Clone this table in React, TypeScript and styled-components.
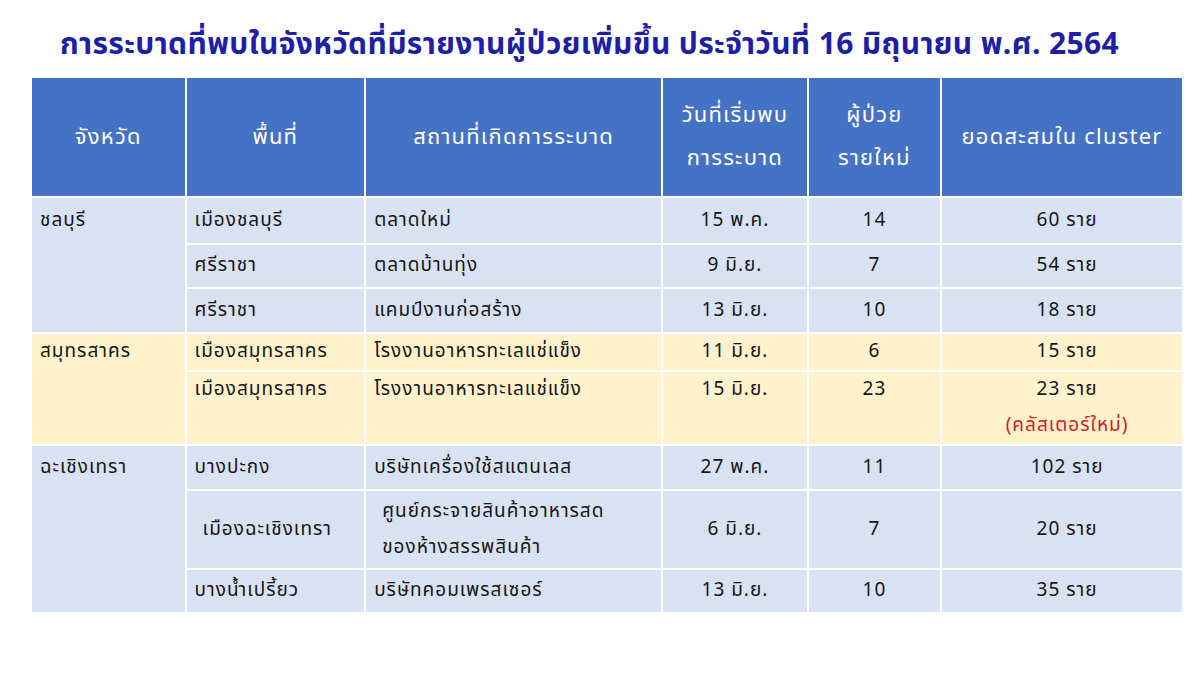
import React from "react";
import styled, { createGlobalStyle } from "styled-components";

const Global = createGlobalStyle`
  html, body { margin: 0; padding: 0; background: #ffffff; }
  body { font-family: Tahoma, "Noto Sans Thai", "Noto Sans", "DejaVu Sans", sans-serif; }
`;

const Page = styled.div`
  width: 1200px;
  height: 675px;
  box-sizing: border-box;
  padding: 22px 0 0 30px;
  display: flex;
  flex-direction: column;
  align-items: flex-start;
`;

const Title = styled.h1`
  margin: 0 0 8px 30px;
  font-size: 30px;
  font-weight: 700;
  letter-spacing: 0.35px;
  line-height: 46px;
  color: #1f1fa6;
  white-space: nowrap;
`;

const Table = styled.table`
  border-collapse: separate;
  border-spacing: 2px;
  table-layout: fixed;
  width: 1154px;
`;

const HeadCell = styled.th<{ $w: number }>`
  width: ${(p) => p.$w}px;
  height: 118px;
  box-sizing: border-box;
  padding: 0;
  background: #4472c4;
  color: #ffffff;
  font-size: 22px;
  font-weight: 400;
  letter-spacing: 1.2px;
  line-height: 43px;
  text-align: center;
  vertical-align: middle;
  white-space: nowrap;
`;

const Row = styled.tr<{ $h: number }>`
  height: ${(p) => p.$h}px;
`;

const Cell = styled.td<{
  $bg: "blue" | "yellow";
  $align?: "left" | "center";
  $valign?: "top" | "middle";
  $pad?: number;
}>`
  box-sizing: border-box;
  padding: 0 0 0 ${(p) => (p.$pad ?? 8)}px;
  background: ${(p) => (p.$bg === "yellow" ? "#fff2cc" : "#d9e2f3")};
  color: #161616;
  font-size: 19px;
  letter-spacing: 1px;
  line-height: 36px;
  text-align: ${(p) => p.$align ?? "left"};
  vertical-align: ${(p) => p.$valign ?? "middle"};
  white-space: nowrap;
`;

const NumCell = styled(Cell)`
  padding: 0;
`;

const TotalCell = styled(Cell)`
  padding: 0 0 0 10px;
`;

const ProvinceLabel = styled.div<{ $h: number }>`
  height: ${(p) => p.$h}px;
  display: flex;
  align-items: center;
`;

const Note = styled.span`
  display: block;
  color: #d42020;
`;

type Bg = "blue" | "yellow";

interface DataRow {
  h: number;
  bg: Bg;
  province?: { name: string; span: number };
  area: string;
  areaPad?: number;
  place: React.ReactNode;
  placePad?: number;
  date: string;
  cases: string;
  total: React.ReactNode;
  valign?: "top" | "middle";
}

const rows: DataRow[] = [
  { h: 45, bg: "blue", province: { name: "ชลบุรี", span: 3 }, area: "เมืองชลบุรี", place: "ตลาดใหม่", date: "15 พ.ค.", cases: "14", total: "60 ราย" },
  { h: 42, bg: "blue", area: "ศรีราชา", place: "ตลาดบ้านทุ่ง", date: "9 มิ.ย.", cases: "7", total: "54 ราย" },
  { h: 43, bg: "blue", area: "ศรีราชา", place: "แคมป์งานก่อสร้าง", date: "13 มิ.ย.", cases: "10", total: "18 ราย" },
  { h: 35, bg: "yellow", province: { name: "สมุทรสาคร", span: 2 }, area: "เมืองสมุทรสาคร", place: "โรงงานอาหารทะเลแช่แข็ง", date: "11 มิ.ย.", cases: "6", total: "15 ราย" },
  {
    h: 70, bg: "yellow", area: "เมืองสมุทรสาคร", place: "โรงงานอาหารทะเลแช่แข็ง", date: "15 มิ.ย.", cases: "23",
    total: (<>23 ราย<Note>(คลัสเตอร์ใหม่)</Note></>), valign: "top",
  },
  { h: 43, bg: "blue", province: { name: "ฉะเชิงเทรา", span: 3 }, area: "บางปะกง", place: "บริษัทเครื่องใช้สแตนเลส", date: "27 พ.ค.", cases: "11", total: "102 ราย" },
  {
    h: 77, bg: "blue", area: "เมืองฉะเชิงเทรา", areaPad: 16, placePad: 16,
    place: (<>ศูนย์กระจายสินค้าอาหารสด<br />ของห้างสรรพสินค้า</>), date: "6 มิ.ย.", cases: "7", total: "20 ราย",
  },
  { h: 42, bg: "blue", area: "บางน้ำเปรี้ยว", place: "บริษัทคอมเพรสเซอร์", date: "13 มิ.ย.", cases: "10", total: "35 ราย" },
];

export default function App() {
  return (
    <Page>
      <Global />
      <Title>การระบาดที่พบในจังหวัดที่มีรายงานผู้ป่วยเพิ่มขึ้น ประจำวันที่ 16 มิถุนายน พ.ศ. 2564</Title>
      <Table>
        <thead>
          <tr>
            <HeadCell $w={152}>จังหวัด</HeadCell>
            <HeadCell $w={177}>พื้นที่</HeadCell>
            <HeadCell $w={294}>สถานที่เกิดการระบาด</HeadCell>
            <HeadCell $w={143}>วันที่เริ่มพบ<br />การระบาด</HeadCell>
            <HeadCell $w={131}>ผู้ป่วย<br />รายใหม่</HeadCell>
            <HeadCell $w={239}>ยอดสะสมใน cluster</HeadCell>
          </tr>
        </thead>
        <tbody>
          {rows.map((r, i) => (
            <Row key={i} $h={r.h}>
              {r.province && (
                <Cell $bg={r.bg} rowSpan={r.province.span} $valign="top">
                  <ProvinceLabel $h={r.h}>{r.province.name}</ProvinceLabel>
                </Cell>
              )}
              <Cell $bg={r.bg} $valign={r.valign} $pad={r.areaPad}>{r.area}</Cell>
              <Cell $bg={r.bg} $valign={r.valign} $pad={r.placePad}>{r.place}</Cell>
              <NumCell $bg={r.bg} $align="center" $valign={r.valign}>{r.date}</NumCell>
              <NumCell $bg={r.bg} $align="center" $valign={r.valign}>{r.cases}</NumCell>
              <TotalCell $bg={r.bg} $align="center" $valign={r.valign}>{r.total}</TotalCell>
            </Row>
          ))}
        </tbody>
      </Table>
    </Page>
  );
}
